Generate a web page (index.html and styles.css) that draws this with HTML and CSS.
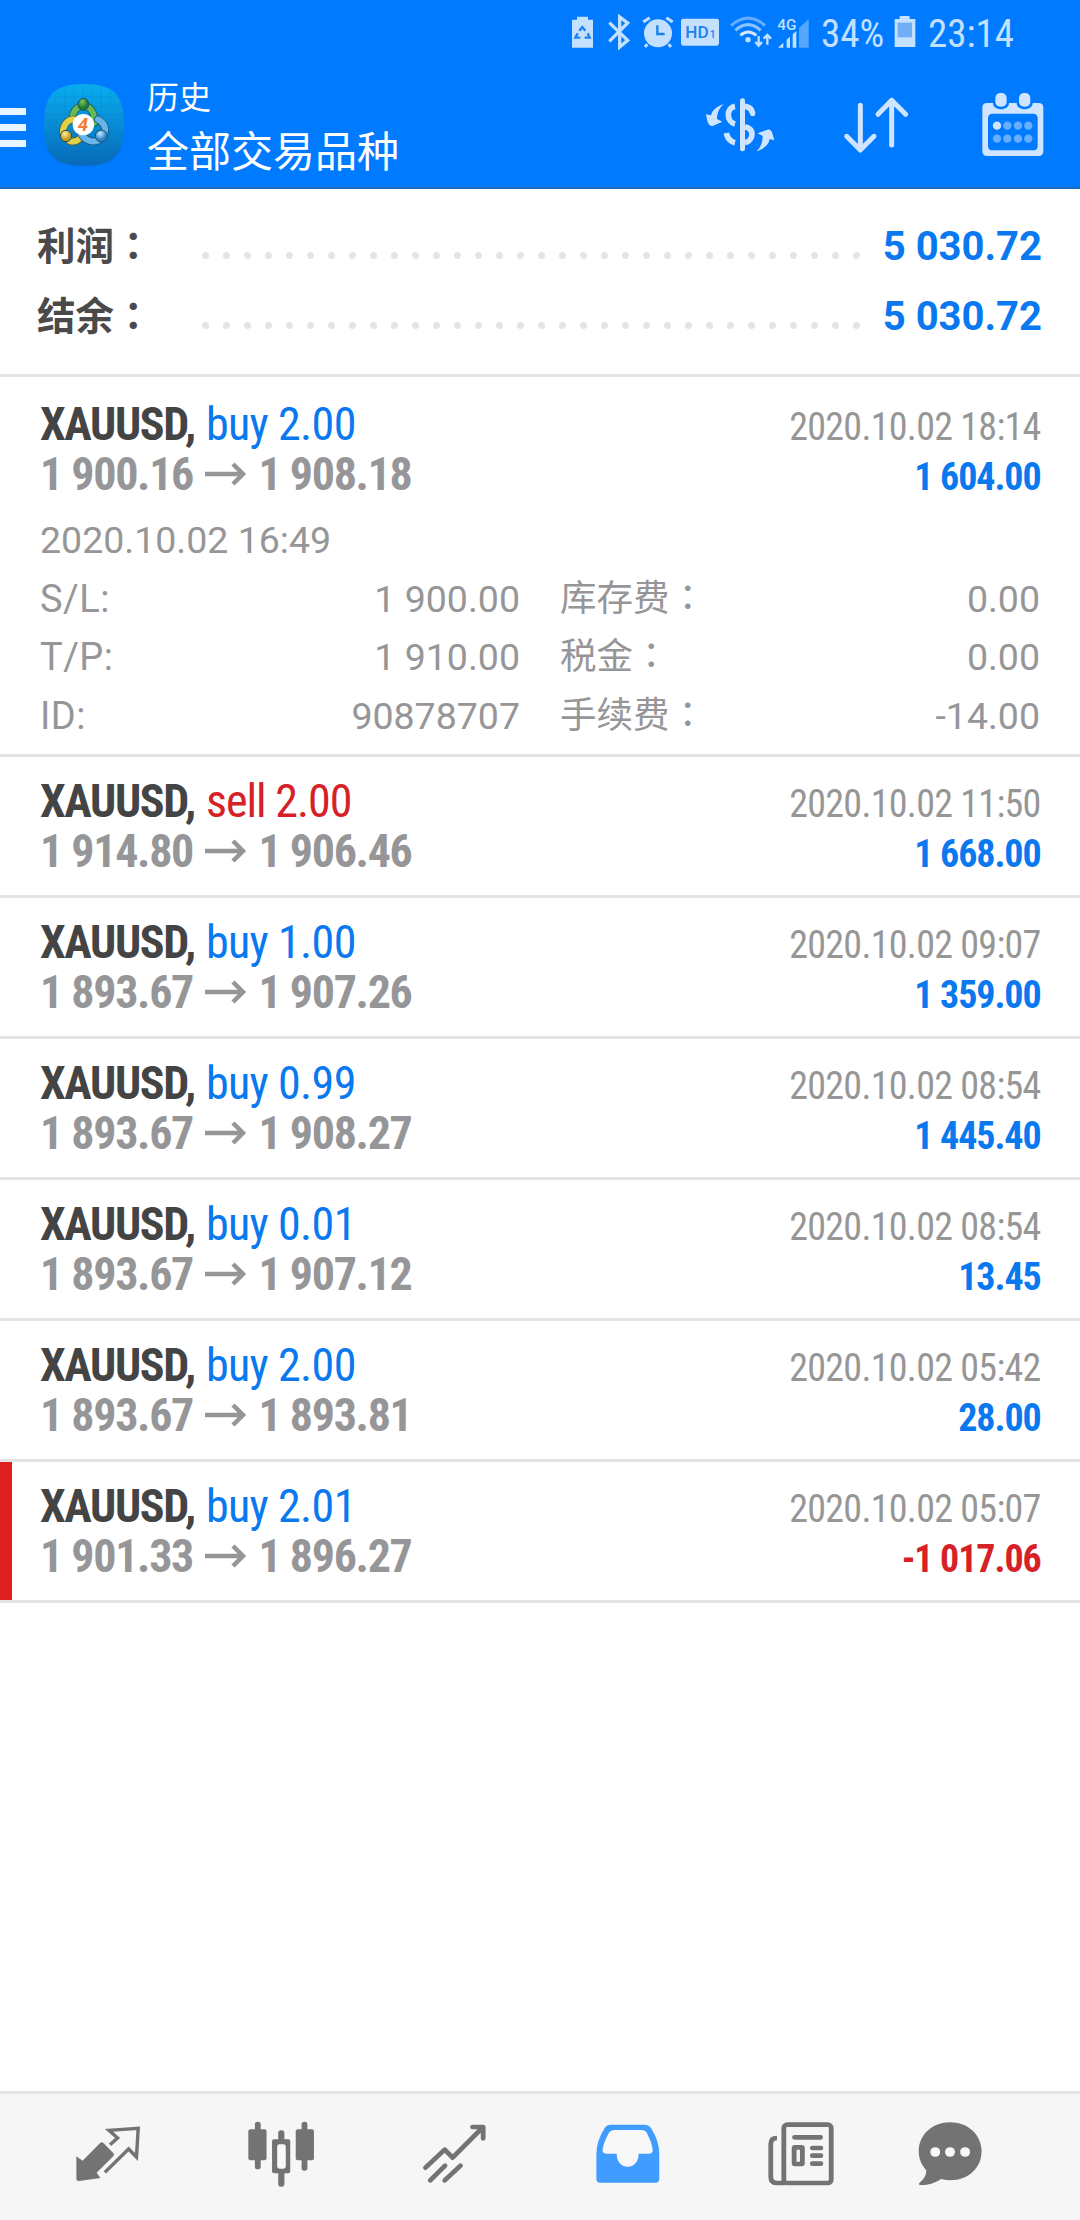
FILE: index.html
```html
<!DOCTYPE html>
<html lang="zh-CN">
<head>
<meta charset="utf-8">
<title>历史</title>
<link rel="stylesheet" href="styles.css">
</head>
<body>
<header class="top">
  <div class="status">
    <svg class="status-icons" width="250" height="36" viewBox="0 0 750 108" fill="#c3e0ff">
      <g transform="translate(0,-40)">
        <path d="M51 48h33v9h15v84H36V57h15z"/>
        <g fill="none" stroke="#1c80f0" stroke-width="7"><path d="M58 90l9-11 9 11M83 98l6 13H74M61 111H46l7-13"/></g>
        <path d="M148 66l55 53-24 20V49l24 18-55 55" fill="none" stroke="#c3e0ff" stroke-width="10"/>
        <circle cx="294" cy="98" r="42"/>
        <path d="M250 64l19-13M338 64l-19-13M262 131l-7 8M326 131l7 8" stroke="#c3e0ff" stroke-width="9"/>
        <path d="M292 74v26h22" fill="none" stroke="#1c80f0" stroke-width="7"/>
        <rect x="363" y="54" width="114" height="81" rx="7"/>
        <text class="hd" x="376" y="113" textLength="70" lengthAdjust="spacingAndGlyphs" font-size="52">HD</text>
        <text class="hd" x="449" y="113" font-size="31">1</text>
        <g fill="none" stroke-width="9"><path d="M513 75q52-45 102 0" stroke="#62adff"/><path d="M526 89q38-34 76 0" stroke="#8cc4ff"/><path d="M541 104q23-20 48 0" stroke="#d4e8ff"/></g>
        <circle cx="564" cy="117" r="8"/>
        <path d="M596 106v28M586 124l10 11 10-11M622 132v-28M611 114l11-11 11 11" fill="none" stroke="#c3e0ff" stroke-width="7"/>
        <text class="gen" x="652" y="89" font-size="43" textLength="57" lengthAdjust="spacingAndGlyphs">4G</text>
        <path d="M654 141l16-15v15zM680 141v-24l10-9v33zM698 141v-40l11-10v50z"/>
        <path d="M717 141V82l29-27v86z" fill="#55a6ff"/>
      </g>
    </svg>
    <span class="status-text pct">34%</span>
    <svg class="battery" width="22" height="32" viewBox="0 0 66 96"><path d="M17 0h30v9h17v84H2V9h15z" fill="#c3e0ff"/><path d="M11 20h43v44H11z" fill="#70adf5"/></svg>
    <span class="status-text">23:14</span>
  </div>
  <div class="bar">
    <div class="menu"><i></i><i></i><i></i></div>
    <svg class="logo" width="80" height="82" viewBox="0 0 240 246">
      <defs>
        <linearGradient id="sky" x1="0" y1="0" x2="0" y2="1"><stop offset="0" stop-color="#08aef0"/><stop offset="1" stop-color="#0769b9"/></linearGradient>
        <radialGradient id="green" cx=".4" cy=".3"><stop offset="0" stop-color="#7cc862"/><stop offset="1" stop-color="#1f7a2c"/></radialGradient>
        <radialGradient id="gold" cx=".4" cy=".3"><stop offset="0" stop-color="#fff19b"/><stop offset="1" stop-color="#c49a1c"/></radialGradient>
        <radialGradient id="blue" cx=".4" cy=".3"><stop offset="0" stop-color="#c4ecff"/><stop offset="1" stop-color="#2e83c8"/></radialGradient>
      </defs>
      <path d="M120 0C210 0 240 32 240 123S210 246 120 246 0 214 0 123 30 0 120 0z" fill="url(#sky)"/>
      <path d="M36 14v218M63 3v240M90 0v246M117 0v246M144 0v246M171 2v241M198 10v226M14 38h212M4 65h232M0 92h240M0 119h240M0 146h240M2 173h236M8 200h224" stroke="#0b7fc4" stroke-opacity=".35" stroke-width="2"/>
      <g fill="none" stroke-linecap="round">
        <path d="M86 98c2-18 14-32 33-32s34 18 32 50" stroke="#1b5c45" stroke-width="23"/>
        <path d="M86 98c2-18 14-32 33-32s34 18 32 50" stroke="#67b95a" stroke-width="18"/>
        <path d="M88 106c-20 2-32 20-31 42M76 170c12 5 24 2 32-8" stroke="#4f6232" stroke-width="23"/>
        <path d="M88 106c-20 2-32 20-31 42M76 170c12 5 24 2 32-8" stroke="#e2d04a" stroke-width="18"/>
        <path d="M162 106c18 10 24 26 20 42M162 170c-20 6-38-2-50-18" stroke="#17568c" stroke-width="23"/>
        <path d="M162 106c18 10 24 26 20 42M162 170c-20 6-38-2-50-18" stroke="#69b5e6" stroke-width="18"/>
      </g>
      <g stroke="#17506a" stroke-width="3">
        <ellipse cx="118" cy="61" rx="16" ry="18" fill="url(#green)"/>
        <circle cx="66" cy="156" r="17" fill="url(#gold)"/>
        <circle cx="172" cy="156" r="18" fill="url(#blue)"/>
      </g>
      <circle cx="118" cy="122" r="32" fill="#fff"/>
      <text class="four" x="117" y="142" text-anchor="middle" font-size="56">4</text>
    </svg>
    <div class="titles"><div class="t1">历史</div><div class="t2">全部交易品种</div></div>
    <svg class="act" width="70" height="56" viewBox="75 80 210 168" fill="#cfe5ff">
      <path d="M132 101c-15 4-36 17-39 34l-15-3 4 20c3 11 9 16 16 15l29-13-16-8c0-20 9-37 21-45zM229 243c15-4 38-17 40-37l14 4-5-18c-4-13-9-16-16-14l-29 11 15 8c0 18-7 37-19 46z"/>
      <path d="M165 108c-12 2-20 12-20 25 0 14 8 25 20 28M139 188c3 17 13 26 26 29M195 108c12 1 21 9 23 22M195 169c12 3 21 11 21 23s-9 23-21 25" fill="none" stroke="#cfe5ff" stroke-width="17"/>
      <path d="M218 127v3" stroke="#cfe5ff" stroke-width="15" stroke-linecap="round"/>
      <rect x="180" y="84" width="15" height="159" rx="7"/>
    </svg>
    <svg class="act sort" width="70" height="60" viewBox="483 76 210 180" fill="none" stroke="#cfe5ff" stroke-width="15" stroke-linecap="round" stroke-linejoin="round"><path d="M541 107v132M500 200l41 41 41-41M635 226V92M594 134l41-42 42 42"/></svg>
    <svg class="act cal" width="64" height="66" viewBox="902 66 192 198">
      <path d="M920 99h18c0 25 48 25 48 0h23c0 25 48 25 48 0h18q14 0 14 14v131q0 14-14 14H920q-14 0-14-14V113q0-14 14-14zM937 131q-14 0-14 14v82q0 14 14 14h121q14 0 14-14v-82q0-14-14-14z" fill="#cfe5ff" fill-rule="evenodd"/>
      <rect x="945" y="69" width="34" height="41" rx="15" fill="#cfe5ff"/><rect x="1016" y="69" width="34" height="41" rx="15" fill="#cfe5ff"/>
      <circle cx="950" cy="167" r="12.500" fill="#cfe5ff"/>
      <g fill="#66afff"><circle cx="981" cy="167" r="12.500"/><circle cx="1013" cy="167" r="12.500"/><circle cx="1044" cy="167" r="12.500"/><circle cx="950" cy="206" r="12.500"/><circle cx="981" cy="206" r="12.500"/><circle cx="1013" cy="206" r="12.500"/><circle cx="1044" cy="206" r="12.500"/></g>
    </svg>
  </div>
</header>

<section class="summary">
  <div class="sum"><span class="sum-label">利润<span class="colon" lang="zh-TW">：</span></span><span class="dots"></span><span class="sum-val">5 030.72</span></div>
  <div class="sum"><span class="sum-label">结余<span class="colon" lang="zh-TW">：</span></span><span class="dots"></span><span class="sum-val">5 030.72</span></div>
</section>

<main class="deals">
  <article class="deal open">
    <div class="line"><span class="sym">XAUUSD,</span><span class="side buy">buy 2.00</span><span class="date">2020.10.02 18:14</span></div>
    <div class="line"><span class="price">1 900.16</span><svg class="arrow" viewBox="0 0 42 24"><path d="M0 12h38M28 2l10 10-10 10"/></svg><span class="price">1 908.18</span><span class="profit">1 604.00</span></div>
    <div class="details">
      <span class="opened">2020.10.02 16:49</span>
      <span class="key">S/L:</span><span class="val">1 900.00</span><span class="cn">库存费<span class="colon" lang="zh-TW">：</span></span><span class="val">0.00</span>
      <span class="key">T/P:</span><span class="val">1 910.00</span><span class="cn">税金<span class="colon" lang="zh-TW">：</span></span><span class="val">0.00</span>
      <span class="key">ID:</span><span class="val">90878707</span><span class="cn">手续费<span class="colon" lang="zh-TW">：</span></span><span class="val">-14.00</span>
    </div>
  </article>
  <article class="deal">
    <div class="line"><span class="sym">XAUUSD,</span><span class="side sell">sell 2.00</span><span class="date">2020.10.02 11:50</span></div>
    <div class="line"><span class="price">1 914.80</span><svg class="arrow" viewBox="0 0 42 24"><path d="M0 12h38M28 2l10 10-10 10"/></svg><span class="price">1 906.46</span><span class="profit">1 668.00</span></div>
  </article>
  <article class="deal">
    <div class="line"><span class="sym">XAUUSD,</span><span class="side buy">buy 1.00</span><span class="date">2020.10.02 09:07</span></div>
    <div class="line"><span class="price">1 893.67</span><svg class="arrow" viewBox="0 0 42 24"><path d="M0 12h38M28 2l10 10-10 10"/></svg><span class="price">1 907.26</span><span class="profit">1 359.00</span></div>
  </article>
  <article class="deal">
    <div class="line"><span class="sym">XAUUSD,</span><span class="side buy">buy 0.99</span><span class="date">2020.10.02 08:54</span></div>
    <div class="line"><span class="price">1 893.67</span><svg class="arrow" viewBox="0 0 42 24"><path d="M0 12h38M28 2l10 10-10 10"/></svg><span class="price">1 908.27</span><span class="profit">1 445.40</span></div>
  </article>
  <article class="deal">
    <div class="line"><span class="sym">XAUUSD,</span><span class="side buy">buy 0.01</span><span class="date">2020.10.02 08:54</span></div>
    <div class="line"><span class="price">1 893.67</span><svg class="arrow" viewBox="0 0 42 24"><path d="M0 12h38M28 2l10 10-10 10"/></svg><span class="price">1 907.12</span><span class="profit">13.45</span></div>
  </article>
  <article class="deal">
    <div class="line"><span class="sym">XAUUSD,</span><span class="side buy">buy 2.00</span><span class="date">2020.10.02 05:42</span></div>
    <div class="line"><span class="price">1 893.67</span><svg class="arrow" viewBox="0 0 42 24"><path d="M0 12h38M28 2l10 10-10 10"/></svg><span class="price">1 893.81</span><span class="profit">28.00</span></div>
  </article>
  <article class="deal loss">
    <div class="line"><span class="sym">XAUUSD,</span><span class="side buy">buy 2.01</span><span class="date">2020.10.02 05:07</span></div>
    <div class="line"><span class="price">1 901.33</span><svg class="arrow" viewBox="0 0 42 24"><path d="M0 12h38M28 2l10 10-10 10"/></svg><span class="price">1 896.27</span><span class="profit">-1 017.06</span></div>
  </article>
</main>

<nav class="tabs">
  <span class="tab"><svg width="68" height="66" viewBox="218 127 198 198" preserveAspectRatio="none"><path d="M222 233l18 13 52-54q4-3 8 0l30 32q3 4 0 8l-49 50 11 16-62 9q-8 1-8-7z" fill="#737373"/><path d="M320 198l22-20-25-23 85-6-5 86-23-24-69 70" fill="none" stroke="#737373" stroke-width="10"/></svg></span>
  <span class="tab"><svg width="68" height="66" viewBox="718 125 198 198" preserveAspectRatio="none" fill="#737373"><rect x="738" y="127" width="17" height="143" rx="8"/><rect x="719" y="150" width="53" height="93" rx="6"/><rect x="874" y="127" width="17" height="147" rx="8"/><rect x="857" y="150" width="53" height="93" rx="6"/><rect x="806" y="153" width="18" height="169" rx="8"/><rect x="788" y="180" width="53" height="102" rx="6"/><rect x="803" y="195" width="25" height="73" rx="7" fill="#f8f8f8"/></svg></span>
  <span class="tab"><svg width="68" height="66" viewBox="1220 124 198 198" preserveAspectRatio="none" fill="none" stroke="#737373" stroke-width="14" stroke-linecap="round" stroke-linejoin="round"><path d="M1233 264l56-54 23 24 87-90M1370 142h31v34M1247 302l43-44M1289 302l46-44"/></svg></span>
  <span class="tab"><svg width="68" height="66" viewBox="155 124 198 198" preserveAspectRatio="none"><path d="M204 135h98q12 0 19 10 24 40 24 76v77q0 11-11 11H173q-11 0-11-11v-77q0-36 24-76 6-10 18-10z" fill="#419cff"/><path d="M217 151h74q14 0 18 9 17 36 17 52 0 10-10 10h-31c0 52-64 52-64 0h-31q-10 0-10-10 0-16 18-52 5-9 19-9z" fill="#f8f8f8"/></svg></span>
  <span class="tab"><svg width="68" height="66" viewBox="661 123 198 198" preserveAspectRatio="none" fill="none" stroke="#737373" stroke-width="14"><rect x="710" y="134" width="138" height="175" rx="10"/><path d="M690 174q-18 0-18 18v98q0 19 19 19h22"/><path d="M741 172h76M793 204h25M793 227h25M793 251h25" stroke-linecap="round"/><rect x="740" y="202" width="24" height="50" rx="2"/></svg></span>
  <span class="tab last"><svg width="68" height="66" viewBox="1094 123 198 198" preserveAspectRatio="none"><path d="M1193 127c52 0 92 37 92 87 0 60-56 100-118 83-20 14-42 19-60 18q-8-1-3-6c17-15 20-26 20-38-14-16-22-34-22-57 0-50 40-87 91-87z" fill="#737373"/><g fill="#f8f8f8"><circle cx="1150" cy="216" r="14.500"/><circle cx="1193" cy="216" r="14.500"/><circle cx="1237" cy="216" r="14.500"/></g></svg></span>
</nav>
</body>
</html>
```
FILE: styles.css
```css
* { box-sizing: border-box; }
body {
  margin: 0;
  width: 1080px;
  height: 2220px;
  display: flex;
  flex-direction: column;
  background: #fff;
  color: #969698;
  font-family: Roboto, "Noto Sans CJK SC", sans-serif;
  overflow: hidden;
}
svg { display: block; flex: none; }

.top { height: 189px; background: #007aff; border-bottom: 2px solid #1a6bc2; }
.status { height: 64px; display: flex; align-items: flex-start; padding-left: 560px; }
.status-icons { margin-top: 14px; }
.status-text {
  font-family: "Roboto Condensed", Roboto, sans-serif;
  font-stretch: 75%;
  font-size: 39px;
  line-height: 46px;
  margin-top: 11px;
  color: #c3e0ff;
}
.pct { margin-left: 11px; width: 73px; }
.battery { margin: 16px 12px 0 0; }
.hd { font-family: Roboto, sans-serif; font-weight: 500; fill: #1c80f0; }
.gen { font-family: Roboto, sans-serif; font-weight: 500; }
.four { font-family: Roboto, sans-serif; font-weight: 700; font-style: italic; fill: #f47a35; }

.bar { display: flex; align-items: flex-start; height: 123px; }
.menu { display: flex; flex-direction: column; gap: 9px; width: 26px; margin-top: 44px; }
.menu i { height: 7px; background: #e9f6ff; }
.logo { margin: 20px 0 0 18px; }
.titles { margin: 10px 0 0 23px; width: 540px; color: #fff; white-space: nowrap; }
.t1 { font-size: 32px; line-height: 48px; }
.t2 { font-size: 42px; line-height: 62px; }
.act { margin-top: 33px; margin-left: 18px; }
.sort { margin-left: 66px; margin-top: 31px; }
.cal { margin-left: 70px; margin-top: 28px; }

.colon { font-family: "Noto Sans CJK TC", sans-serif; line-height: 0; }

.summary { height: 188px; border-bottom: 3px solid #e4e4e4; padding: 23px 38px 0 37px; }
.sum { display: flex; align-items: center; height: 70px; font-weight: 700; }
.sum-label { width: 165px; font-size: 38.5px; line-height: 70px; color: #4a4a4a; }
.dots {
  width: 672px;
  height: 21px;
  margin-top: 17px;
  margin-right: auto;
  margin-left: -7px;
  background: radial-gradient(circle, #e4e4e5 3px, transparent 4px) 0 0 / 21px 21px;
}
.sum-val { font-size: 40px; line-height: 70px; color: #0a78ee; }

.deal { border-bottom: 3px solid #e4e4e4; height: 141px; padding: 19px 40px 0; }
.deal.open { height: 380px; padding-top: 22px; }
.deal.loss { background: linear-gradient(#e01f1f, #e01f1f) 0 0 / 12px 138px no-repeat; }
.line {
  display: flex;
  align-items: baseline;
  height: 50px;
  line-height: 50px;
  font-family: "Roboto Condensed", Roboto, sans-serif;
  font-stretch: 75%;
  font-size: 46px;
  white-space: pre;
}
.sym { width: 166px; font-weight: 700; color: #444; letter-spacing: -1.4px; }
.buy { color: #0a78ee; letter-spacing: -0.65px; }
.sell { color: #d62227; letter-spacing: -1px; }
.date { margin-left: auto; margin-right: -0.7px; font-size: 38px; color: #969696; letter-spacing: -0.7px; }
.price { width: 165px; font-weight: 700; letter-spacing: -1.3px; }
.arrow { width: 42px; height: 24px; margin: 0 11.5px 0 0; align-self: center; fill: none; stroke: #969698; stroke-width: 4.500; }
.profit { margin-left: auto; margin-right: -0.6px; font-size: 38px; font-weight: 700; color: #0a78ee; letter-spacing: -1.1px; }
.loss .profit { color: #d62227; }

.details {
  display: grid;
  grid-template-columns: 100px 380px 240px 280px;
  grid-auto-rows: 58.6px;
  margin-top: 12px;
  width: 1000px;
  font-size: 37.5px;
  line-height: 58.6px;
  white-space: pre;
}
.details .opened { grid-column: 1 / -1; }
.details .key { font-size: 38px; letter-spacing: 0.5px; }
.details .cn { padding-left: 40px; font-size: 36.5px; }
.details .val { text-align: right; }

.tabs { margin-top: auto; height: 129px; border-top: 3px solid #e4e4e4; background: #f6f6f6; display: flex; padding-left: 22px; }
.tab { width: 173px; display: flex; justify-content: center; padding-top: 27px; }
.tab.last { width: 126px; }
```
